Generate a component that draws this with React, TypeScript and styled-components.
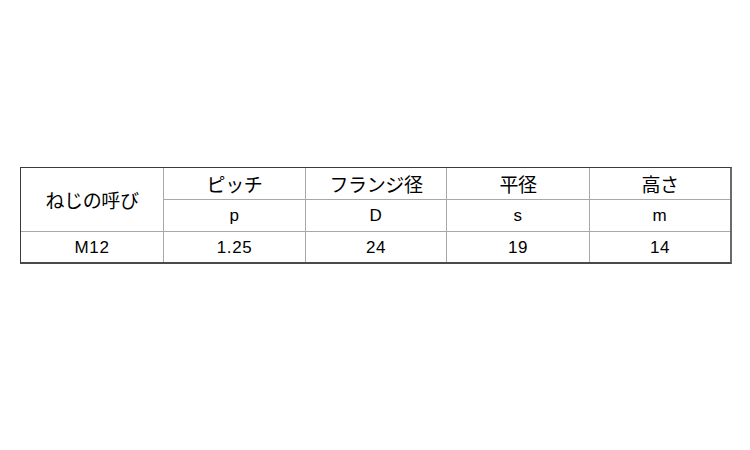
import React from "react";
import styled, { createGlobalStyle } from "styled-components";

const Global = createGlobalStyle`
  html, body { margin: 0; padding: 0; background: #ffffff; }
`;

const Page = styled.div`
  width: 750px;
  height: 450px;
  box-sizing: border-box;
  padding: 167px 0 0 20px;
  background: #ffffff;
`;

const Grid = styled.div`
  display: grid;
  width: max-content;
  grid-template-columns: 142px 141px 140px 142px 140px;
  grid-template-rows: 31px 31px 30px;
  gap: 1px;
  background: #a8a8a8;
  border-top: 1px solid #3a3a3a;
  border-left: 1px solid #3a3a3a;
  border-right: 2px solid #6a6a6a;
  border-bottom: 2px solid #4a4a4a;
`;

const Cell = styled.div<{ $rowSpan?: number; $cjk?: boolean }>`
  background: #ffffff;
  display: flex;
  align-items: center;
  justify-content: center;
  color: #000000;
  grid-row: ${(p) => (p.$rowSpan ? `span ${p.$rowSpan}` : "auto")};
  font-family: ${(p) =>
    p.$cjk
      ? `"Noto Sans CJK JP", "Noto Sans", sans-serif`
      : `"Liberation Sans", Arial, sans-serif`};
  font-size: ${(p) => (p.$cjk ? "19px" : "17px")};
  font-weight: 400;
  letter-spacing: ${(p) => (p.$cjk ? "-0.4px" : "0.6px")};
  line-height: 1;
  white-space: nowrap;
`;

const headers = ["ピッチ", "フランジ径", "平径", "高さ"];
const symbols = ["p", "D", "s", "m"];
const values = ["1.25", "24", "19", "14"];

export default function App() {
  return (
    <>
      <Global />
      <Page>
        <Grid>
          <Cell $cjk $rowSpan={2}>ねじの呼び</Cell>
          {headers.map((h) => (
            <Cell $cjk key={h}>{h}</Cell>
          ))}
          {symbols.map((s) => (
            <Cell key={s}>{s}</Cell>
          ))}
          <Cell>M12</Cell>
          {values.map((v) => (
            <Cell key={v}>{v}</Cell>
          ))}
        </Grid>
      </Page>
    </>
  );
}
